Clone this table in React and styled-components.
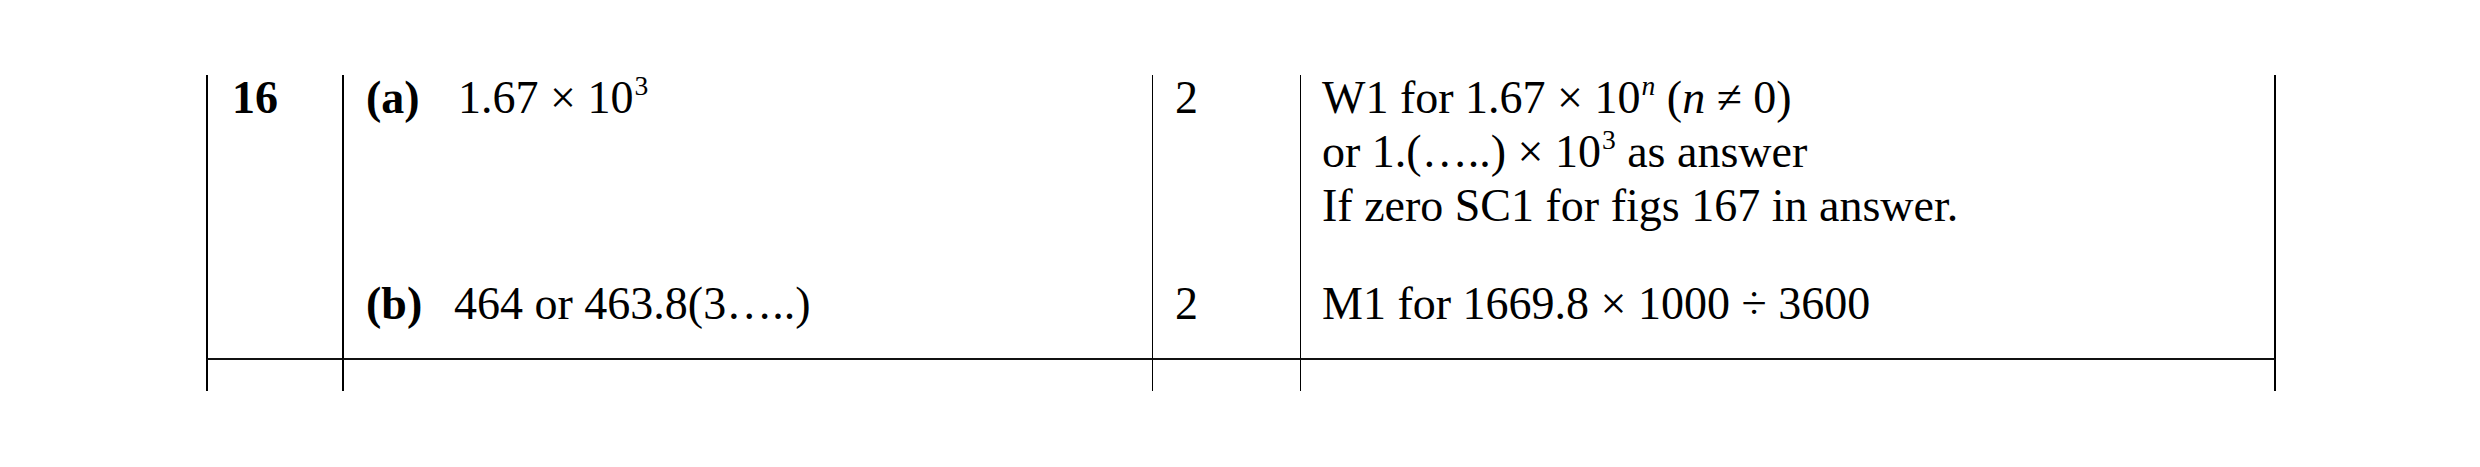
import React from 'react';
import styled, { createGlobalStyle } from 'styled-components';

const GlobalStyle = createGlobalStyle`
  html, body {
    margin: 0;
    padding: 0;
    background: #ffffff;
  }
  body {
    font-family: "Liberation Serif", "Times New Roman", serif;
    color: #000000;
  }
`;

const Page = styled.div`
  width: 2480px;
  height: 467px;
  padding: 75px 0 0 206px;
  box-sizing: border-box;
  background: #ffffff;
`;

const Table = styled.div`
  display: grid;
  grid-template-columns: 136px 810px 148px 976px;
  font-size: 46px;
  line-height: 54px;
`;

const Cell = styled.div`
  box-sizing: border-box;
  border-left: ${p => (p.$thin ? '1px' : '2px')} solid #000;
  border-right: ${p => (p.$last ? '2px solid #000' : 'none')};
  border-bottom: ${p => (p.$rule ? '2px solid #111' : 'none')};
  height: ${p => p.$h}px;
  padding-left: ${p => p.$pad || 22}px;
`;

const Text = styled.div`
  margin-top: -4px;
  white-space: nowrap;
`;

const QNum = styled.span`
  font-weight: bold;
`;

const Part = styled.span`
  display: inline-block;
  width: ${p => p.$w || 92}px;
  font-weight: bold;
`;

const Sup = styled.sup`
  font-size: 0.6em;
  line-height: 0;
  vertical-align: 0.65em;
  margin-left: 1px;
`;

const It = styled.i`
  font-style: italic;
`;

const rows = [
  { h: 206 },
  { h: 79, rule: true },
  { h: 31 },
];

export default function App() {
  return (
    <>
      <GlobalStyle />
      <Page>
        <Table>
          <Cell $h={rows[0].h} $pad={24}>
            <Text><QNum>16</QNum></Text>
          </Cell>
          <Cell $h={rows[0].h}>
            <Text>
              <Part>(a)</Part>1.67 × 10<Sup>3</Sup>
            </Text>
          </Cell>
          <Cell $h={rows[0].h} $thin>
            <Text>2</Text>
          </Cell>
          <Cell $h={rows[0].h} $thin $last $pad={21}>
            <Text>
              W1 for 1.67 × 10<Sup><It>n</It></Sup> (<It>n</It> ≠ 0)
              <br />
              or 1.(…..) × 10<Sup>3</Sup> as answer
              <br />
              If zero SC1 for figs 167 in answer.
            </Text>
          </Cell>

          <Cell $h={rows[1].h} $rule $pad={24} />
          <Cell $h={rows[1].h} $rule>
            <Text>
              <Part $w={88}>(b)</Part>464 or 463.8(3…..)
            </Text>
          </Cell>
          <Cell $h={rows[1].h} $rule $thin>
            <Text>2</Text>
          </Cell>
          <Cell $h={rows[1].h} $rule $thin $last $pad={21}>
            <Text>M1 for 1669.8 × 1000 ÷ 3600</Text>
          </Cell>

          <Cell $h={rows[2].h} />
          <Cell $h={rows[2].h} />
          <Cell $h={rows[2].h} $thin />
          <Cell $h={rows[2].h} $thin $last />
        </Table>
      </Page>
    </>
  );
}
